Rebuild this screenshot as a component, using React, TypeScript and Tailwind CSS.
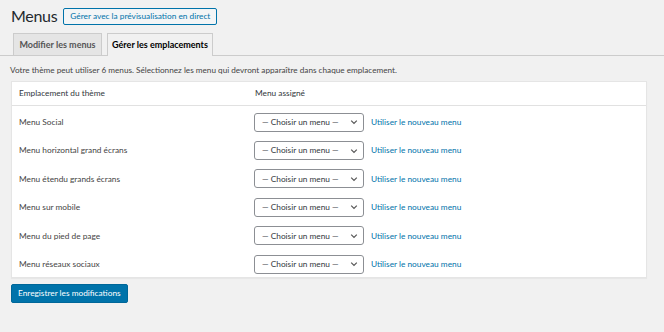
import React from "react";

const rows = [
  "Menu Social",
  "Menu horizontal grand écrans",
  "Menu étendu grands écrans",
  "Menu sur mobile",
  "Menu du pied de page",
  "Menu réseaux sociaux",
];

function Chevron() {
  return (
    <svg width="8" height="8" viewBox="0 0 10 10" className="text-[#555]">
      <path d="M1.5 3.2 L5 6.7 L8.5 3.2" fill="none" stroke="currentColor" strokeWidth="1.5" />
    </svg>
  );
}

export default function App() {
  return (
    <div
      className="w-[664px] h-[332px] bg-[#f1f1f1] text-[#444] overflow-hidden"
      style={{ fontFamily: 'Lato, "Noto Sans", sans-serif' }}
    >
      <div className="flex items-center pl-[11px] pt-[7px] h-[25px]">
        <h1 className="text-[16px] leading-none text-[#23282d] font-normal tracking-[-0.3px]">Menus</h1>
        <button className="ml-[6px] h-[17px] px-[6px] border border-[#0073aa] rounded-[2px] bg-[#f3f5f6] text-[#0073aa] text-[8.3px] leading-none whitespace-nowrap">
          Gérer avec la prévisualisation en direct
        </button>
      </div>
      <div className="mt-[9px] flex items-end pl-[13px] border-b border-[#ccc] h-[22px]">
        <div className="h-[22px] w-[89px] flex items-center justify-center border border-[#ccc] border-b-0 bg-[#e5e5e5] text-[#555] text-[9px] font-bold whitespace-nowrap">
          Modifier les menus
        </div>
        <div className="ml-[5px] h-[23px] -mb-px w-[106px] flex items-center justify-center border border-[#ccc] border-b-0 bg-[#f1f1f1] text-[#000] text-[9px] font-bold whitespace-nowrap">
          Gérer les emplacements
        </div>
      </div>
      <p className="pl-[10px] mt-[9px] text-[8.2px] leading-[11px] text-[#444]">
        Votre thème peut utiliser 6 menus. Sélectionnez les menu qui devront apparaître dans chaque emplacement.
      </p>
      <div className="ml-[11px] mt-[5px] w-[636px] bg-white border border-[#e5e5e5] shadow-[0_1px_1px_rgba(0,0,0,0.04)]">
        <div className="flex items-center h-[24px] border-b border-[#e1e1e1] text-[8.3px] text-[#32373c]">
          <div className="w-[242px] pl-[7px]">Emplacement du thème</div>
          <div className="pl-[1px]">Menu assigné</div>
        </div>
        <div className="flex flex-col h-[171px] pt-[2px] overflow-hidden">
          {rows.map((r) => (
            <div key={r} className="flex items-center h-[28.4px] shrink-0">
              <div className="w-[242px] pl-[7px] text-[8.3px] text-[#444]">{r}</div>
              <div className="w-[110px] h-[19px] border border-[#8c8f94] rounded-[3px] bg-white flex items-center justify-between pl-[7px] pr-[5px] text-[8.3px] text-[#32373c] whitespace-nowrap">
                <span>— Choisir un menu —</span>
                <Chevron />
              </div>
              <a className="ml-[7px] text-[8.3px] text-[#0073aa] whitespace-nowrap">Utiliser le nouveau menu</a>
            </div>
          ))}
        </div>
      </div>
      <div className="flex pl-[11px] mt-[6px]">
        <button className="h-[19px] px-[6px] bg-[#0073aa] border border-[#006799] rounded-[2px] text-white text-[8.3px] leading-none whitespace-nowrap">
          Enregistrer les modifications
        </button>
      </div>
    </div>
  );
}
